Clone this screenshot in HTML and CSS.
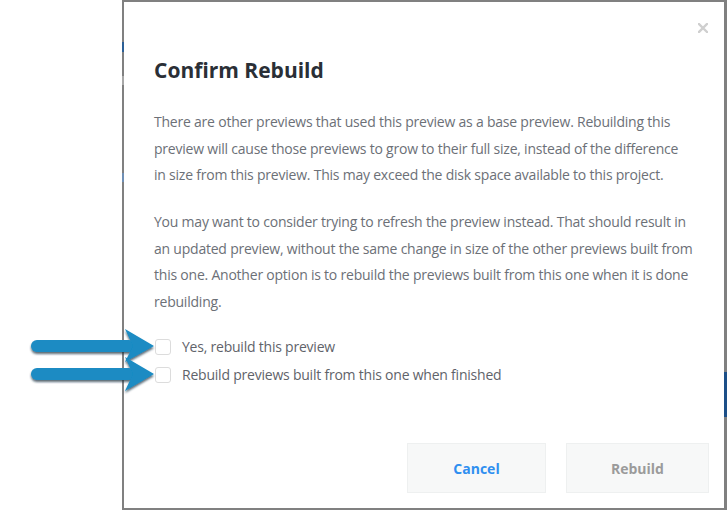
FILE: index.html
```
<!DOCTYPE html>
<html>
<head>
<meta charset="utf-8">
<link rel="stylesheet" href="styles.css">
</head>
<body>
<div class="page">
  <div class="modal">
    <button class="close" aria-label="Close">
      <svg width="10" height="10" viewBox="0 0 10 10"><path d="M1 1 L9 9 M9 1 L1 9" stroke="#cfcfcf" stroke-width="2.4" stroke-linecap="square"/></svg>
    </button>
    <h1 class="title">Confirm Rebuild</h1>
    <p class="text">There are other previews that used this preview as a base preview. Rebuilding this preview will cause those previews to grow to their full size, instead of the difference in size from this preview. This may exceed the disk space available to this project.</p>
    <p class="text">You may want to consider trying to refresh the preview instead. That should result in an updated preview, without the same change in size of the other previews built from this one. Another option is to rebuild the previews built from this one when it is done rebuilding.</p>
    <div class="options">
      <label class="option"><span class="box"></span><span>Yes, rebuild this preview</span></label>
      <label class="option"><span class="box"></span><span>Rebuild previews built from this one when finished</span></label>
    </div>
    <div class="footer">
      <button class="btn btn-cancel">Cancel</button>
      <button class="btn btn-rebuild">Rebuild</button>
    </div>
    <div class="edge-mark"></div>
  </div>
  <div class="bg-mark bg-mark-a"></div>
  <div class="bg-mark bg-mark-b"></div>
  <div class="bg-mark bg-mark-c"></div>
  <svg class="arrows" width="170" height="80" viewBox="0 320 170 80">
    <defs>
      <filter id="sh" x="-10%" y="-30%" width="130%" height="170%">
        <feDropShadow dx="0" dy="2" stdDeviation="1.2" flood-color="#0b2a3a" flood-opacity="0.7"/>
      </filter>
    </defs>
    <g fill="#1a8bc3" filter="url(#sh)">
      <rect x="31" y="340" width="104" height="12" rx="6"/>
      <polygon points="125,329 154,346 125,362 133,346"/>
      <rect x="31" y="368" width="104" height="12" rx="6"/>
      <polygon points="125,357 154,374 125,391 133,374"/>
    </g>
  </svg>
</div>
</body>
</html>
```
FILE: styles.css
```
* { box-sizing: border-box; }
html, body { margin: 0; padding: 0; }
body {
  width: 727px;
  height: 510px;
  overflow: hidden;
  background: #ffffff;
  font-family: "Open Sans", "Liberation Sans", sans-serif;
}
.page {
  position: relative;
  width: 727px;
  height: 510px;
  padding-left: 122px;
}
.bg-mark {
  position: absolute;
  left: 122px;
  width: 2px;
  z-index: 2;
}
.bg-mark-a { top: 42px; height: 10px; background: #2b5f96; }
.bg-mark-b { top: 76px; height: 9px; background: #a8a8a8; }
.bg-mark-c { top: 173px; height: 9px; background: #6f8fb5; }
.modal {
  position: relative;
  width: 605px;
  height: 510px;
  border: 2px solid #808080;
  border-right-width: 3px;
  background: #ffffff;
  display: flex;
  flex-direction: column;
  padding: 54px 31px 15px 30px;
}
.close {
  position: absolute;
  top: 21px;
  left: 574px;
  width: 10px;
  height: 10px;
  padding: 0;
  border: 0;
  background: none;
  display: block;
}
.close svg { display: block; }
.title {
  margin: 0 0 25px 0;
  font-size: 21px;
  line-height: 28px;
  font-weight: 700;
  color: #2a2f36;
}
.text {
  margin: 0 0 20px 0;
  font-size: 14px;
  line-height: 26.67px;
  letter-spacing: -0.22px;
  color: #6c7077;
}
.text + .text { margin-bottom: 0; }
.options {
  margin-top: 21px;
  display: flex;
  flex-direction: column;
  gap: 8px;
}
.option {
  display: flex;
  align-items: center;
  gap: 11px;
  height: 20px;
  font-size: 14px;
  letter-spacing: -0.22px;
  color: #5f636a;
  padding-left: 1px;
}
.box {
  width: 16px;
  height: 16px;
  border: 1px solid #dcdcdc;
  border-radius: 3px;
  background: #fff;
  flex: none;
}
.footer {
  margin-top: auto;
  display: flex;
  justify-content: flex-end;
  gap: 20px;
  margin-right: -16px;
}
.btn {
  height: 50px;
  border: 1px solid #eef0f0;
  background: #f7f8f8;
  font-family: "Open Sans", "Liberation Sans", sans-serif;
  font-size: 14px;
  font-weight: 700;
  padding: 0;
}
.btn-cancel { width: 139px; color: #2f8ff0; }
.btn-rebuild { width: 143px; color: #9b9b9b; }
.edge-mark {
  position: absolute;
  right: -3px;
  top: 370px;
  width: 3px;
  height: 45px;
  background: #1c4f88;
}
.arrows {
  position: absolute;
  left: 0;
  top: 320px;
}
```
